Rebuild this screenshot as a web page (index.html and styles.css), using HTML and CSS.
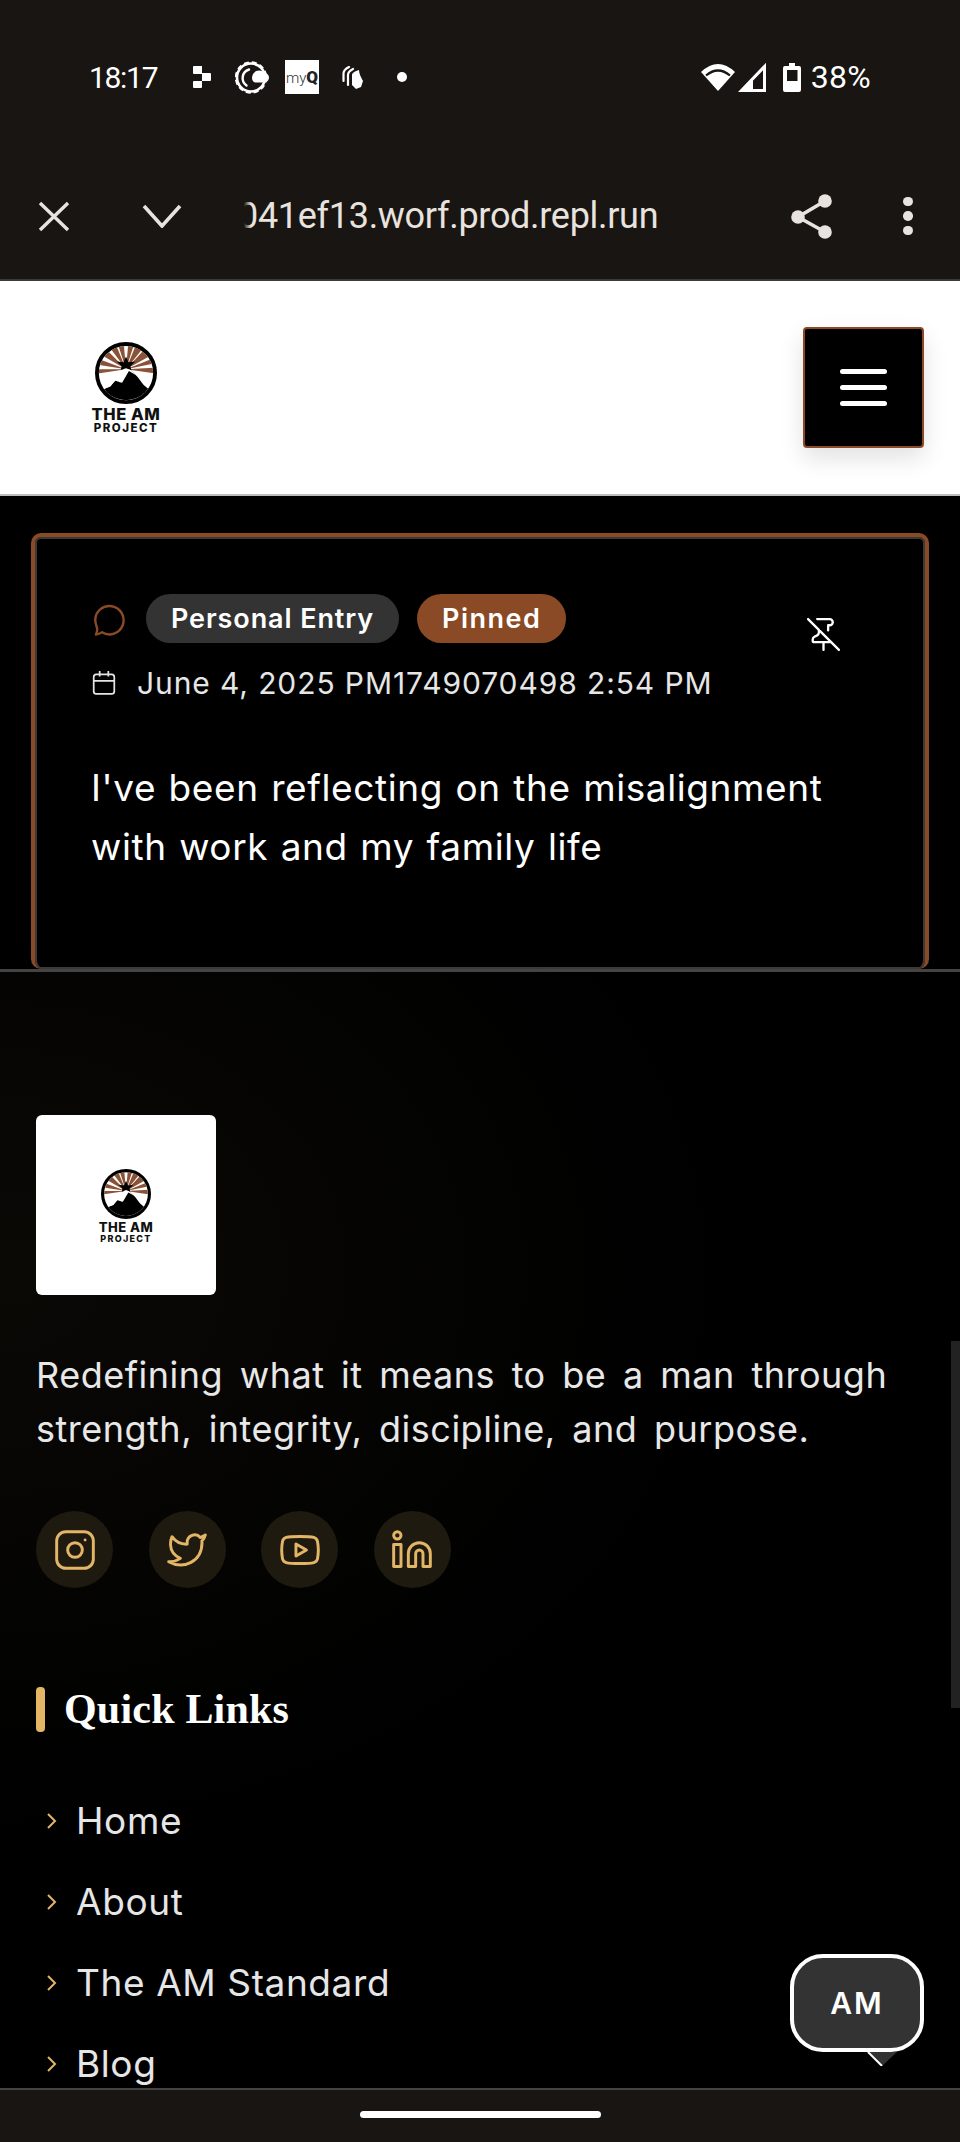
FILE: index.html
```html
<!DOCTYPE html>
<html lang="en">
<head>
<meta charset="utf-8">
<title>The AM Project</title>
<link rel="stylesheet" href="styles.css">
</head>
<body>
<div class="phone">
  <div class="status">
    <div class="status-left">
      <span class="clock">18:17</span>
      <svg class="si-a" viewBox="0 0 19 22"><path d="M1 0h8v7h8a1 1 0 0 1 1 1v6a1 1 0 0 1-1 1H9v6a1 1 0 0 1-1 1H1a1 1 0 0 1-1-1v-5a1 1 0 0 1 1-1h8V8H1a1 1 0 0 1-1-1V1a1 1 0 0 1 1-1z" fill="#fff"/></svg>
      <svg class="si-b" viewBox="0 0 34 33"><circle cx="16" cy="16.500" r="14" fill="none" stroke="#fff" stroke-width="2.600"/><circle cx="16" cy="16.500" r="15.200" fill="none" stroke="#fff" stroke-width="2" stroke-dasharray="5 3"/><path d="M14 8.500a9 9 0 0 0-2.500 16" fill="none" stroke="#fff" stroke-width="2.400" stroke-linecap="round"/><path d="M17 17c0-4 3-7.500 7-7.500 3 0 4 1.500 5 2 3 .5 5 2.500 5 5s-2 5-5 5H21c-2.500 0-4-2-4-4.500z" fill="#fff"/></svg>
      <span class="myq">my<b>Q</b></span>
      <svg class="si-c" viewBox="0 0 21 23"><path d="M1.500 15V7.500C1.500 4 4 2.500 7 1M6 19V9C6 6 8 4.500 11 3" fill="none" stroke="#fff" stroke-width="2.200" stroke-linecap="round"/><path d="M10 9c0-2 3-4 7-5 0 4 2 7 4 11l-2 6-5 2-4-4z" fill="#fff"/></svg>
      <span class="dot"></span>
    </div>
    <div class="status-right">
      <svg class="si-wifi" viewBox="0 0 34 27"><path d="M0 8Q17-8 34 8L17 27z" fill="#fff"/><path d="M5 11.500Q17 1.500 29 11.500" fill="none" stroke="#181512" stroke-width="2.200"/></svg>
      <svg class="si-sig" viewBox="0 0 28 29"><path d="M26.500 3.500V27.500H3.500z" fill="none" stroke="#fff" stroke-width="3"/><path d="M1 29l14-14V29z" fill="#fff"/></svg>
      <svg class="si-bat" viewBox="0 0 18 29"><path d="M6 0h6v3h4a2 2 0 0 1 2 2v22a2 2 0 0 1-2 2H2a2 2 0 0 1-2-2V5a2 2 0 0 1 2-2h4z" fill="#fff"/><rect x="4" y="7" width="10.500" height="11" fill="#181512"/></svg>
      <span class="pct">38%</span>
    </div>
  </div>
  <div class="toolbar">
    <svg class="tb-x" viewBox="0 0 32 31"><path d="M2 2l28 27M30 2L2 29" stroke="#e8e3df" stroke-width="3.400" fill="none"/></svg>
    <svg class="tb-chev" viewBox="0 0 40 24"><path d="M2 2l18 20L38 2" stroke="#e8e3df" stroke-width="3.600" fill="none"/></svg>
    <div class="url">041ef13.worf.prod.repl.run</div>
    <svg class="tb-share" viewBox="0 0 41 45"><path d="M34 7L7 23l27 15" stroke="#e8e3df" stroke-width="3.600" fill="none"/><circle cx="34" cy="7" r="6.800" fill="#e8e3df"/><circle cx="7" cy="23" r="6.800" fill="#e8e3df"/><circle cx="34" cy="38" r="6.800" fill="#e8e3df"/></svg>
    <div class="tb-more"><i></i><i></i><i></i></div>
  </div>
  <div class="page">
    <header class="site-head">
      <div class="brand">
        <svg class="mark" viewBox="0 0 64 64"><use href="#am-mark"/></svg>
        <div class="brand-a">THE AM</div>
        <div class="brand-b">PROJECT</div>
      </div>
      <button class="burger"><i></i><i></i><i></i></button>
    </header>
    <main class="content">
      <article class="card">
        <div class="card-top">
          <div class="card-meta">
            <div class="tags">
              <svg class="ic-chat" viewBox="0 0 24 24"><path d="M3.500 23c1.500-.2 3-.8 4.300-1.600A10 10 0 1 0 3 13c.2 2.500 1 4.200 1.300 5.500.2 1.500-.1 3-.8 4.500z" fill="none" stroke="#8b4a26" stroke-width="1.700" stroke-linejoin="round"/></svg>
              <span class="tag tag-grey">Personal Entry</span>
              <span class="tag tag-brown">Pinned</span>
            </div>
            <div class="date">
              <svg class="ic-cal" viewBox="0 0 24 24"><rect x="2.500" y="4" width="19" height="18" rx="2.500" fill="none" stroke="#e6e6e6" stroke-width="1.600"/><path d="M2.500 10h19M8 1v5M16 1v5" stroke="#e6e6e6" stroke-width="1.600" fill="none"/></svg>
              <span>June 4, 2025 PM1749070498 2:54 PM</span>
            </div>
          </div>
          <svg class="ic-unpin" viewBox="0 0 24 24"><path d="M12 17v5M15 9.340V6h1a2 2 0 0 0 0-4H7.890M2 2l20 20M9 9v1.760a2 2 0 0 1-1.110 1.790l-1.780.9A2 2 0 0 0 5 15.240V16a1 1 0 0 0 1 1h11" fill="none" stroke="#fff" stroke-width="1.500" stroke-linecap="round" stroke-linejoin="round"/></svg>
        </div>
        <p class="entry">I've been reflecting on the misalignment with work and my family life</p>
      </article>
    </main>
    <footer class="foot">
      <div class="foot-logo">
        <svg class="foot-mark" viewBox="0 0 64 64"><use href="#am-mark"/></svg>
        <div class="foot-a">THE AM</div>
        <div class="foot-b">PROJECT</div>
      </div>
      <p class="foot-text">Redefining what it means to be a man through strength, integrity, discipline, and purpose.</p>
      <div class="social">
        <a class="soc"><svg viewBox="0 0 24 24"><rect x="2" y="2" width="20" height="20" rx="5" /><circle cx="12" cy="12" r="4"/><path d="M17.500 6.500h.01"/></svg></a>
        <a class="soc"><svg class="soc-tw" viewBox="0 0 24 24"><path d="M23 3a10.900 10.900 0 0 1-3 1.500 4.500 4.500 0 0 0-7.900 3v1A10.700 10.700 0 0 1 3 4s-4 9 5 13a11.600 11.600 0 0 1-7 2c9 5 20 0 20-11.500a4.500 4.500 0 0 0-.1-.8A7.700 7.700 0 0 0 23 3z"/></svg></a>
        <a class="soc"><svg viewBox="0 0 24 24"><path d="M2.500 7.100a2.800 2.800 0 0 1 2-2C6.300 4.600 12 4.600 12 4.600s5.700 0 7.500.5a2.800 2.800 0 0 1 2 2 29 29 0 0 1 .5 4.900 29 29 0 0 1-.5 5 2.800 2.800 0 0 1-2 1.900c-1.800.5-7.500.5-7.500.5s-5.700 0-7.500-.5a2.800 2.800 0 0 1-2-1.900A29 29 0 0 1 2 12a29 29 0 0 1 .5-4.900z"/><path d="M9.800 15.300l5.700-3.300-5.700-3.300z"/></svg></a>
        <a class="soc"><svg viewBox="0 0 24 24"><path d="M16 8a6 6 0 0 1 6 6v7h-4v-7a2 2 0 0 0-4 0v7h-4v-7a6 6 0 0 1 6-6z"/><rect x="2" y="9" width="4" height="12"/><circle cx="4" cy="4" r="2"/></svg></a>
      </div>
      <h3 class="foot-title">Quick Links</h3>
      <ul class="links">
        <li><svg viewBox="0 0 12 20"><path d="M2 3l7 7-7 7"/></svg>Home</li>
        <li><svg viewBox="0 0 12 20"><path d="M2 3l7 7-7 7"/></svg>About</li>
        <li><svg viewBox="0 0 12 20"><path d="M2 3l7 7-7 7"/></svg>The AM Standard</li>
        <li><svg viewBox="0 0 12 20"><path d="M2 3l7 7-7 7"/></svg>Blog</li>
      </ul>
    </footer>
    <div class="scroll-thumb"></div>
    <div class="bubble"><span>AM</span><svg class="tail" viewBox="0 0 30 14"><path d="M0 0h30L15 14z" fill="#333"/><path d="M1 0l14 14" stroke="#fff" stroke-width="2"/></svg></div>
  </div>
  <div class="gesture"><span></span></div>
</div>
<svg class="defs" width="0" height="0">
  <defs>
    <g id="am-mark">
      <clipPath id="am-clip"><circle cx="32" cy="32" r="28"/></clipPath>
      <circle cx="32" cy="32" r="30" fill="#fff" stroke="#000" stroke-width="4"/>
      <g clip-path="url(#am-clip)">
        <path d="M32 28L-6 14V22zM32 28L2-2 -6 6zM32 28L18-6 8-4zM32 28L29-6H21zM32 28L43-6H35zM32 28L58-4 46-6zM32 28L72 6 62-4zM32 28L72 20V12zM32 28L72 34V26zM32 28L-6 34V28z" fill="#8a5236"/>
        <path d="M0 64V52L16 46 22 38 26 42 32 24 44 36 50 44 64 56V64z" fill="#000"/>
        <path d="M6 50L16 42 21 34 25 36 32 24 42 34 35 30 28 42 21 40 15 46z" fill="#fff"/>
        <path d="M32 15l2.500 6 7-1-5 5 1 4-5.500-2-5.500 2 1-4-5-5 7 1z" fill="#000"/>
      </g>
    </g>
  </defs>
</svg>
</body>
</html>
```
FILE: styles.css
```css
* { box-sizing: border-box; }
html, body { margin: 0; padding: 0; background: #000; }
.phone { width: 960px; height: 2142px; display: flex; flex-direction: column; overflow: hidden; }
.defs { position: absolute; }

.status { height: 154px; background: #181512; display: flex; justify-content: space-between; align-items: flex-start; padding: 57px 89px 0 89px; color: #fff; font-family: Roboto, sans-serif; font-size: 30px; }
.status-left, .status-right { display: flex; align-items: center; height: 40px; }
.clock { width: 68px; letter-spacing: -1.300px; white-space: nowrap; }
.si-a { width: 19px; height: 22px; margin-left: 36px; }
.si-b { width: 34px; height: 33px; margin-left: 23px; }
.myq { width: 34px; height: 34px; margin-left: 16px; background: #fff; color: #333; font: 300 15px/34px Roboto, sans-serif; text-align: center; white-space: nowrap; }
.myq b { font-size: 17px; font-weight: 900; color: #222; }
.si-c { width: 21px; height: 23px; margin-left: 23px; }
.dot { width: 10px; height: 10px; border-radius: 50%; background: #fff; margin-left: 34px; }
.si-wifi { width: 34px; height: 27px; }
.si-sig { width: 28px; height: 29px; margin-left: 3px; }
.si-bat { width: 18px; height: 29px; margin-left: 17px; }
.pct { margin-left: 10px; font-size: 32px; letter-spacing: .3px; }

.toolbar { height: 127px; background: #181512; border-bottom: 2px solid #3a3a3a; display: flex; align-items: center; padding: 0 0 1px 38px; }
.tb-x { width: 32px; height: 31px; flex-shrink: 0; }
.tb-chev { width: 40px; height: 24px; margin-left: 72px; flex-shrink: 0; }
.url { width: 429px; margin-left: 56px; color: #e8e3df; font: 36px/44px Roboto, sans-serif; letter-spacing: -.3px; white-space: nowrap; flex-shrink: 0; position: relative; }
.url::before { content: ""; position: absolute; left: 0; top: 0; bottom: 0; width: 13px; background: linear-gradient(90deg, #181512 45%, rgba(24,21,18,0)); }
.tb-share { width: 41px; height: 45px; margin-left: 124px; flex-shrink: 0; }
.tb-more { display: flex; flex-direction: column; gap: 5px; margin-left: 71px; }
.tb-more i { display: block; width: 9.500px; height: 9.500px; border-radius: 50%; background: #e8e3df; }

.page { flex: 1; min-height: 0; position: relative; overflow: hidden; background: #000; font-family: Inter, sans-serif; }

.site-head { height: 215px; background: #fff; border-bottom: 2px solid #bdbdbd; display: flex; justify-content: space-between; padding: 46px 36px 0 93px; }
.brand { width: 66px; display: flex; flex-direction: column; align-items: center; color: #111; font-weight: 800; }
.mark { width: 62px; height: 62px; margin-top: 15px; flex-shrink: 0; }
.brand-a { font-size: 16.500px; line-height: 15px; margin-top: 3px; white-space: nowrap; letter-spacing: .6px; }
.brand-b { font-size: 11.500px; line-height: 13px; letter-spacing: 1.500px; white-space: nowrap; }
.burger { width: 121px; height: 121px; background: #000; border: 2px solid #8b4a26; border-radius: 4px; padding: 0; display: flex; flex-direction: column; align-items: center; justify-content: center; gap: 11px; box-shadow: 0 10px 25px rgba(0,0,0,.12); }
.burger i { display: block; width: 47px; height: 5px; border-radius: 3px; background: #fff; }

.content { height: 476px; padding: 37px 31px 0; border-bottom: 3px solid #444; }
.card { height: 436px; background: #000; border: 4px solid #8b4a26; border-bottom-width: 0; border-radius: 10px; box-shadow: inset 0 0 0 2px #3a3a3a; padding: 57px 56px 0 56px; }
.card-top { display: flex; justify-content: space-between; align-items: flex-start; }
.tags { display: flex; align-items: center; gap: 18px; }
.ic-chat { width: 34px; height: 34px; margin-right: 3px; }
.tag { height: 49px; border-radius: 25px; padding: 0 25px; display: flex; align-items: center; color: #fff; font-size: 27px; font-weight: 600; letter-spacing: .9px; white-space: nowrap; }
.tag-grey { background: #333; }
.tag-brown { background: #8b4a26; letter-spacing: 1.500px; }
.date { display: flex; align-items: center; gap: 20px; margin-top: 20px; color: #e6e6e6; font-size: 30px; line-height: 40px; white-space: nowrap; letter-spacing: .9px; }
.ic-cal { width: 26px; height: 26px; }
.ic-unpin { width: 37px; height: 37px; margin: 22px 27px 0 0; }
.entry { margin: 55px 0 0; color: #fff; font-size: 37px; line-height: 59px; font-weight: 400; letter-spacing: .6px; word-spacing: 1.500px; }

.foot { padding: 143px 36px 0; background: radial-gradient(ellipse 900px 700px at 0 25%, #0a0906, #000 80%); height: 1200px; }
.foot-logo { width: 180px; height: 180px; background: #fff; border-radius: 6px; display: flex; flex-direction: column; align-items: center; padding-top: 54px; color: #111; font-weight: 800; }
.foot-mark { width: 50px; height: 50px; flex-shrink: 0; }
.foot-a { font-size: 13px; line-height: 13px; margin-top: 2px; letter-spacing: .5px; }
.foot-b { font-size: 9px; line-height: 9px; letter-spacing: 1.300px; }
.foot-text { margin: 53px 0 0; color: #e8e8e8; font-size: 36px; line-height: 54px; letter-spacing: .5px; word-spacing: 6px; }
.social { display: flex; gap: 35.600px; margin-top: 55px; }
.soc { width: 77px; height: 77px; border-radius: 50%; background: #1f1a10; display: flex; align-items: center; justify-content: center; }
.soc svg { width: 44px; height: 44px; fill: none; stroke: #e3b566; stroke-width: 1.600; stroke-linecap: round; stroke-linejoin: round; }
.soc .soc-tw { width: 40px; height: 40px; stroke-width: 1.750; }
.foot-title { margin: 99px 0 0; display: flex; gap: 19px; color: #fff; font: 700 42px/45px "Liberation Serif", serif; letter-spacing: .2px; }
.foot-title::before { content: ""; width: 9px; height: 45px; border-radius: 4px; background: #e3b566; }
.links { list-style: none; margin: 48px 0 0; padding: 0 0 0 10px; color: #e6e6e6; font-size: 37px; letter-spacing: .6px; }
.links li { height: 81px; display: flex; align-items: center; gap: 18px; }
.links svg { width: 12px; height: 20px; fill: none; stroke: #e3b566; stroke-width: 2; flex-shrink: 0; }

.scroll-thumb { position: absolute; right: 0; top: 1060px; width: 9px; height: 367px; background: #222; }
.bubble { position: absolute; left: 790px; top: 1673px; width: 134px; height: 98px; background: #333; border: 4px solid #fff; border-radius: 33px; display: flex; align-items: center; justify-content: center; color: #fff; font-size: 30px; font-weight: 600; letter-spacing: 2px; }
.tail { position: absolute; left: 73px; top: 94px; width: 30px; height: 14px; }

.gesture { height: 54px; background: #181512; border-top: 2px solid #444; display: flex; justify-content: center; padding-top: 21px; }
.gesture span { width: 241px; height: 7px; border-radius: 4px; background: #fff; }
```
